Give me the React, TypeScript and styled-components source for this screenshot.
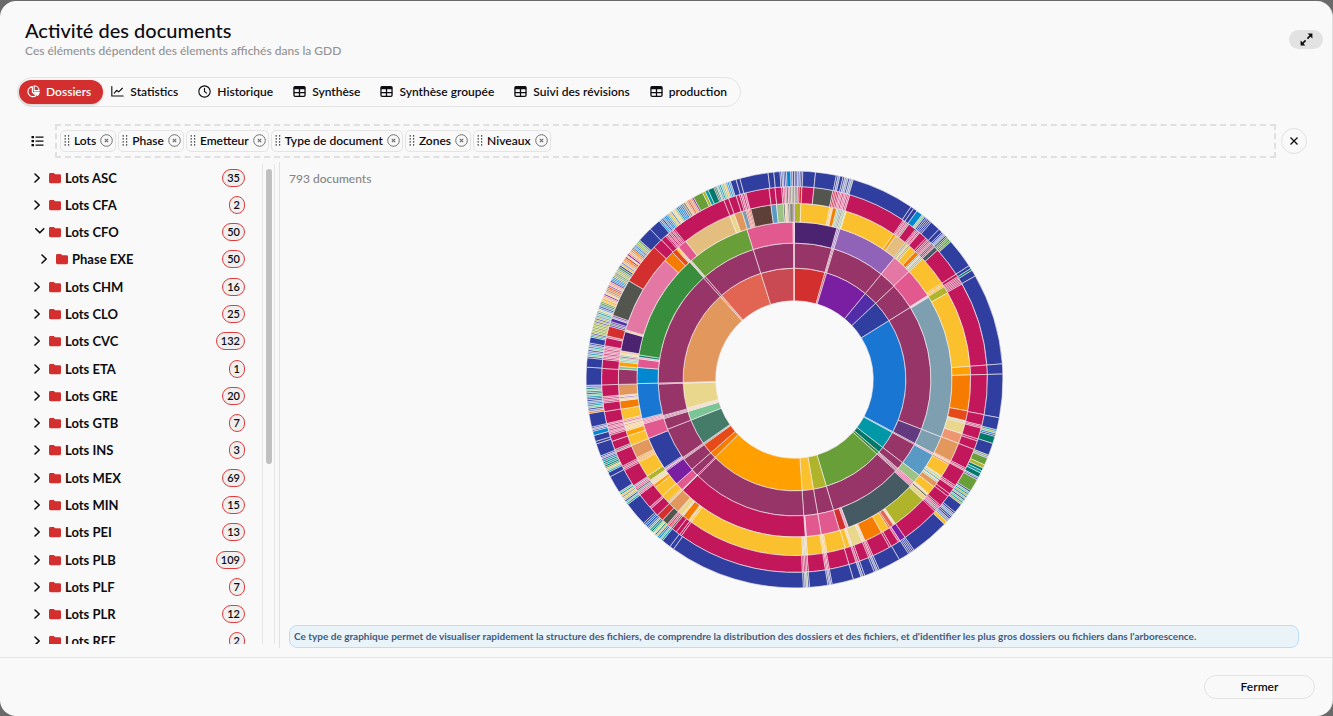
import React from 'react';
import styled, { createGlobalStyle } from 'styled-components';

const GlobalStyle = createGlobalStyle`
  * { box-sizing: border-box; }
  body {
    margin: 0;
    background: #6a6a6a;
    color: #0d0d12;
    font-family: Lato, "Open Sans", sans-serif;
    font-size: 12px;
  }
  button { font: inherit; color: inherit; cursor: pointer; }
`;

const Backdrop = styled.div`
  height: 100vh;
  padding-top: 1px;
  background: #6a6a6a;
`;

const Modal = styled.section`
  display: flex;
  flex-direction: column;
  height: 100%;
  overflow: hidden;
  background: #f9f9f9;
  border-right: 1px solid #e0e0e0;
  border-radius: 16px;
`;

const Header = styled.header`
  display: flex;
  align-items: flex-start;
  justify-content: space-between;
  padding: 17px 9px 0 25px;
`;

const Title = styled.h1`
  margin: 0;
  font-size: 20px;
  font-weight: 500;
  line-height: 24px;
`;

const Subtitle = styled.p`
  margin: 0;
  font-size: 12px;
  font-weight: 500;
  line-height: 18px;
  color: #929292;
`;

const ExpandButton = styled.button`
  display: flex;
  align-items: center;
  justify-content: center;
  width: 34px;
  height: 19px;
  margin-top: 12px;
  padding: 0;
  border: 0;
  border-radius: 10px;
  background: #e2e2e2;
`;

const TabBar = styled.nav`
  display: flex;
  align-self: flex-start;
  align-items: center;
  height: 30px;
  margin: 17px 0 0 17px;
  padding: 0 1px;
  border: 1px solid #e4e4e4;
  border-radius: 15px;
`;

const Tab = styled.button<{ $active?: boolean }>`
  display: flex;
  align-items: center;
  gap: 6px;
  height: 24px;
  padding: 0 12px 2px 8px;
  border: 0;
  border-radius: 12px;
  font-weight: 600;
  white-space: nowrap;
  background: ${(p) => (p.$active ? '#d32f2f' : 'transparent')};
  color: ${(p) => (p.$active ? '#ffffff' : 'inherit')};
  box-shadow: ${(p) => (p.$active ? '0 1px 3px rgba(0, 0, 0, 0.2)' : 'none')};
`;

const FilterRow = styled.div`
  display: flex;
  align-items: center;
  margin-top: 17px;
  padding: 0 25px 0 31px;
`;

const IconButton = styled.button`
  display: flex;
  padding: 0;
  border: 0;
  background: transparent;
`;

const DropZone = styled.div`
  display: flex;
  flex: 1;
  align-items: center;
  gap: 2px;
  height: 34px;
  margin: 0 5px 0 11px;
  padding: 0 3px;
  border: 2px dashed #e0e0e0;
`;

const Chip = styled.div`
  display: flex;
  align-items: center;
  gap: 4px;
  height: 22px;
  padding: 0 2px 1px 3px;
  border: 1px solid #e4e4e4;
  border-radius: 5px;
  font-weight: 600;
  white-space: nowrap;
`;

const CloseButton = styled.button`
  display: flex;
  align-items: center;
  justify-content: center;
  width: 26px;
  height: 26px;
  padding: 0;
  border: 1px solid #e2e2e2;
  border-radius: 50%;
  background: transparent;
`;

const Panels = styled.div`
  display: flex;
  flex: 1;
  min-height: 0;
  margin: 4px 0 9px;
`;

const TreePanel = styled.aside`
  display: flex;
  width: 280px;
  padding: 2px 4px 4px 0;
  border-right: 1px solid #e0e0e0;
`;

const Tree = styled.ul`
  display: grid;
  flex: 1;
  grid-auto-rows: 1fr;
  height: 491px;
  margin: 0;
  padding: 0;
  list-style: none;
`;

const TreeViewport = styled.div`
  display: flex;
  flex: 1;
  align-items: flex-start;
  overflow: hidden;
`;

const TreeRow = styled.li<{ $depth: number }>`
  display: flex;
  align-items: center;
  padding: 0 17px 0 ${(p) => 32 + p.$depth * 7}px;
`;

const Toggle = styled.button`
  display: flex;
  flex: 1;
  align-items: center;
  gap: 4px;
  padding: 0;
  border: 0;
  background: transparent;
  font-size: 13px;
  font-weight: 700;
  line-height: 16px;
`;

const Count = styled.span`
  padding: 0 4px;
  border: 1px solid #e23b3b;
  border-radius: 9px;
  background: #f0f0f0;
  font-size: 11px;
  font-weight: 600;
  line-height: 16px;
`;

const ScrollTrack = styled.div`
  width: 13px;
  padding: 5px 2px 0 3px;
  border: 1px solid #e6e6e6;
  border-width: 0 1px;
`;

const ScrollThumb = styled.div`
  height: 62%;
  border-radius: 4px;
  background: #c0c0c0;
`;

const ChartPanel = styled.main`
  display: flex;
  flex: 1;
  flex-direction: column;
  justify-content: space-between;
  padding: 0 33px 0 9px;
`;

const ChartArea = styled.div`
  display: grid;
  grid-template-columns: 1fr auto 1fr;
  padding-top: 9px;
`;

const DocumentCount = styled.p`
  margin: 0;
  font-size: 12px;
  font-weight: 500;
  line-height: 15px;
  color: #858585;
`;

const Info = styled.p`
  margin: 0;
  padding: 0 4px;
  border: 1px solid #bcdcfa;
  border-radius: 8px;
  background: #eaf4f8;
  color: #435a80;
  font-size: 10px;
  font-weight: 700;
  line-height: 21px;
`;

const Footer = styled.footer`
  display: flex;
  align-items: center;
  justify-content: flex-end;
  height: 59px;
  padding: 0 17px;
  border-top: 1px solid #e4e4e4;
`;

const FooterButton = styled.button`
  width: 111px;
  height: 24px;
  padding: 0 0 2px;
  border: 1px solid #e2e2e2;
  border-radius: 12px;
  background: transparent;
  font-weight: 600;
`;

/* ---------- icons ---------- */

const PieIcon = () => (
  <svg width="13" height="13" viewBox="0 0 16 16" fill="none" stroke="currentColor" strokeWidth="1.4" strokeLinejoin="round" aria-hidden="true">
    <path d="M6.6 2A6.2 6.2 0 1 0 11 13.2L6.6 8.6Z" />
    <path d="M8.8 0.9A6.2 6.2 0 0 1 14.9 6.8H8.8Z" />
    <path d="M8.8 8.8H15A6.2 6.2 0 0 1 13 12.8Z" fill="currentColor" />
  </svg>
);

const LineChartIcon = () => (
  <svg width="13" height="13" viewBox="0 0 16 16" fill="none" stroke="currentColor" strokeWidth="1.4" strokeLinecap="round" strokeLinejoin="round" aria-hidden="true">
    <path d="M1 2V13.5H15" />
    <path d="M4 10L7 6.5L9.5 8.5L14 4" />
  </svg>
);

const ClockIcon = () => (
  <svg width="13" height="13" viewBox="0 0 16 16" fill="none" stroke="currentColor" strokeWidth="1.4" strokeLinecap="round" aria-hidden="true">
    <circle cx="8" cy="8" r="7" />
    <path d="M8 4V8L10.5 10" />
  </svg>
);

const TableIcon = () => (
  <svg width="13" height="13" viewBox="0 0 16 16" fill="none" stroke="currentColor" strokeWidth="1.6" aria-hidden="true">
    <rect x="1.2" y="2" width="13.6" height="12" rx="1.4" />
    <path d="M1 3.6H15" strokeWidth="3.2" />
    <path d="M1 9.4H15M8 4V14" />
  </svg>
);

const ListIcon = () => (
  <svg width="13" height="12" viewBox="0 0 13 12" fill="currentColor" aria-hidden="true">
    <path d="M0.5 1H3V3.2H0.5ZM0.5 5H3V7.2H0.5ZM0.5 9H3V11.2H0.5ZM4.5 1.4H12.5V2.8H4.5ZM4.5 5.4H12.5V6.8H4.5ZM4.5 9.4H12.5V10.8H4.5Z" />
  </svg>
);

const GripIcon = () => (
  <svg width="6" height="11" viewBox="0 0 6 11" fill="currentColor" aria-hidden="true">
    {[1, 4, 7, 10].map((y) => (
      <React.Fragment key={y}>
        <rect x="0.6" y={y - 0.7} width="1.2" height="1.2" />
        <rect x="4" y={y - 0.7} width="1.2" height="1.2" />
      </React.Fragment>
    ))}
  </svg>
);

const CircleXIcon = () => (
  <svg width="13" height="13" viewBox="0 0 13 13" fill="none" stroke="#707070" strokeWidth="1" aria-hidden="true">
    <circle cx="6.5" cy="6.5" r="5.8" />
    <path d="M4.8 4.8L8.2 8.2M8.2 4.8L4.8 8.2" strokeWidth="1.2" />
  </svg>
);

const CrossIcon = () => (
  <svg width="8" height="8" viewBox="0 0 8 8" stroke="currentColor" strokeWidth="1.3" aria-hidden="true">
    <path d="M0.5 0.5L7.5 7.5M7.5 0.5L0.5 7.5" />
  </svg>
);

const ExpandIcon = () => (
  <svg width="13" height="13" viewBox="0 0 13 13" fill="none" stroke="currentColor" strokeWidth="1.6" aria-hidden="true">
    <path d="M11.4 1.6L7.4 5.6M1.6 11.4L5.6 7.4" />
    <path d="M7.6 0.6H12.4V5.4L10.9 3.9L9.1 2.1ZM0.6 7.6V12.4H5.4L3.9 10.9L2.1 9.1Z" fill="currentColor" stroke="none" />
  </svg>
);

const Chevron = ({ open }: { open?: boolean }) => (
  <svg width="13" height="12" viewBox="0 0 13 12" fill="none" stroke="currentColor" strokeWidth="1.6" strokeLinecap="round" strokeLinejoin="round" aria-hidden="true">
    <path d={open ? 'M3.8 2.8L7.8 6.8L11.8 2.8' : 'M3 2L7.2 6L3 10'} />
  </svg>
);

const FolderIcon = () => (
  <svg width="12" height="12" viewBox="0 0 12 12" fill="#d32f2f" aria-hidden="true">
    <path d="M1.4 1H4.8L6.2 2.2H10.6A1.4 1.4 0 0 1 12 3.6V9.8A1.4 1.4 0 0 1 10.6 11.2H1.4A1.4 1.4 0 0 1 0 9.8V2.4A1.4 1.4 0 0 1 1.4 1Z" />
  </svg>
);

/* ---------- sunburst ---------- */

const palette: Record<string, string> = {
  b: '#303f9f', k: '#1976d2', s: '#0288d1', c: '#c2185b', p: '#983568', P: '#e25990',
  q: '#e478a4', y: '#fbc02d', o: '#ffa000', O: '#f57c00', R: '#e64a19', r: '#d32f2f',
  g: '#689f38', G: '#388e3c', t: '#0097a7', T: '#00796b', v: '#afb42b', V: '#7b1fa2',
  i: '#512da8', d: '#4c2370', D: '#633a80', l: '#9163b8', x: '#52564e', X: '#465a63',
  z: '#7e9fb0', Z: '#5899c5', m: '#79c596', n: '#9cc286', N: '#447c69', h: '#e9d78e',
  a: '#e4be7e', e: '#e2975d', f: '#ee9670', E: '#e16552', u: '#c94a53', B: '#5d4037',
  w: '#8f8a78',
};

/* Tint of the "W" key, one for each ring from the centre outwards. */
const tints = ['#f0c8c0', '#c58aa8', '#e6a3c0', '#efcf95', '#d75a8c', '#7f8bc8'];

/* Each entry is an end angle in degrees followed by its colour key.
   Several keys mean a run of single documents cycling through these colours. */
const rings = [
  `15.9r 16.8u 39.5V 46.8i 58.1b 118k 118.5s 127.6t 130.7T 132.1G 163.4g 170.2v 176.1y
   225.6o 228.8O 234.2R 235.1BX 248.6N 253.3m 254.7aa 255.2a 268.1h 268.5h 318.2e 319.1f
   342.4E 359.6u 360r`,
  `15.9p 16.8pp 39.5p 46.8p 58.1p 111.4p 118D 118.5p 127.6p 130.7p 132.1pp 163.4p 170.2p
   176.1p 225p 225.6p 228.8p 234.2p 235.1pp 248.6p 253.3p 254.7pp 268.1p 268.5p 318.2p
   319.1p 342.4p 359.6p 360p`,
  `15.7d 16.8ll 39.4l 46.7q 57.8P 58.5WW 111.4z 118z 118.6WP 127.5Z 130.7n 132.7PP
   160X 160.9W 163.4r 170.2P 175.7P 176.1W 225.3c 225.6W 228.5P 234.5V 235.8VW 248b
   253.6P 255.5PP 268.5k 274.4s 277.6P 278.2W 279T 318.3G 319.1Wn 342.4g 359.5P 360W`,
  `2.1v 11.6y 12.6yW 13.9O 16.8nmzw 17.1W 34.2y 35.2o 39.1a 41.2wvh 43.4y 44.8O 46.7mWn
   56.8y 58.2oy 60.5v 85.7y 88.5o 100.3O 103.6R 104.4hnT 108h 111.3f 117.6e 118.9fhR
   123.3y 125.8hmyt 127.6e 130.4y 131.2hW 131.7x 133.2h 145v 145.8Wh 147.2E 147.7R 150.4y
   156.4O 157.4Wh 160.9h 161.6Wy 163.2y 169.4y 170.8yW 175.8y 177.4aWn 215.9y 217yW
   219.2O 219.7W 221.4h 225.3e 226.1yO 228.7y 232.2y 233.3o 235.1Wh 236.7v 242y 243.6oO
   248e 251.3y 253o 254.8yW 256.8fhP 260.3y 263O 264.8hal 268.4e 273.4p 274.3m 275.8o
   277.2mm 278.6pmh 279.4W 285.8d 286.4W 312.6q 316.2O 317.8R 318.8yW 321.8P 338.4a
   340h 342.6e 344z 345.6rER 352.3B 354.1Z 356.4n 358.4xWa 359.6w 360V`,
  `0.9xw 1.4c 2.2r 5.8c 11.5x 13cr 16.7cWP 34.3c 35.9cW 36.4w 38.9c 40.5cW 42.9c 44cW
   46.6cWPx 47.9X 56.9c 57.8c 60.3cc 85.7c 88.5c 100.5c 103.8c 104.6cc 108c 108.6c 111.3c
   117.4c 118.3cW 123.4c 124.4cWP 126.4c 127.3c 130.8c 133.2cPWz 145c 146.8V 147.4P 149.9c
   150.5c 156c 157.4cW 160.3c 161.4cW 163.6c 169.6c 170.8cW 175.9c 177.7cc 215.9c 216.5c
   217.8c 219.3c 221.3xWrP 223.2x 225.3r 228c 228.6W 233.3c 236.6WPzx 241.9c 243.3cW
   247.8c 248.7Wx 251.3c 253.2c 256.8cWP 260.4c 263c 264.9cW 268.4c 273.3c 276c 280.1cPW
   282.6c 283.1W 286.1r 287.5iN 288.6i 289.5zV 300.8x 313.3r 316.4c 318.1c 321.4cW 338.5c
   340c 342.4c 343.4c 345.4cP 352.4c 354.2c 356.2c 358.6cPw 360ww`,
  `2.3bbW 5.8b 11.6b 12.6bW 13.5b 16.4bWz 34b 34.9b 36b 37.8s 38.7nmt 41bb 43.9b 45b
   46.8bWzb 48.6Gg 56.9b 57.8b 58.4T 60.2b 85.7b 88.5b 100.6b 104b 105.9tvsbh 107.9T
   111.3b 112.2gWb 114.2g 115.2v 116T 116.7t 118T 118.8Wb 122.3g 126.9bmtvsn 129.6b
   133bWzb 134y 145b 146.8bb 149.8b 156b 157.5bW 160.3b 161.4bW 163.6b 169.6b 170.8bW
   175.9b 177.6bnWb 215.5b 216.7b 219.3b 224.9tmksythmT 226.4bk 233.2b 237.3tmbnyZy
   242.2b 243.5b 245.2tmyG 247.2Tt 248.5bW 252b 252.7b 254.4b 255.6s 256.8bW 260.6b 261.6OW
   264.9bmtkZb 267.8tmT 268.4W 273.4b 276b 280.1bmtW 281.8b 283tgb 286vgvg 287.6bv
   291.2ZmtmhZb 293Ggyo 298.4afVhewORl 299.6sk 302.3vzgn 304.3GbyW 309aeOrhVf
   310.6kz 312vmg 316.2b 319.5b 322.6sZbZk 325.4nyZhh 327.2sk 328.3ww 331afReeVO
   333.8g 334.6v 335.5t 337.2T 338.4xTn 342.1ZtmnyZs 343.7b 344.8b 352.7b 354.3b 356b
   357.8bWb 359s 360lb`,
];

const RADIUS = 208.4;
const LEVELS = rings.length + 1;
const DOCUMENT_ANGLE = 360 / 793;

const polar = (r: number, deg: number) => {
  const a = (deg * Math.PI) / 180;
  return `${(r * Math.sin(a)).toFixed(2)} ${(-r * Math.cos(a)).toFixed(2)}`;
};

const arcPath = (r0: number, r1: number, from: number, to: number) => {
  const large = to - from > 180 ? 1 : 0;
  return `M${polar(r1, from)}A${r1} ${r1} 0 ${large} 1 ${polar(r1, to)}L${polar(r0, to)}A${r0} ${r0} 0 ${large} 0 ${polar(r0, from)}Z`;
};

const ringSegments = (spec: string) => {
  const segments: { from: number; to: number; key: string }[] = [];
  let from = 0;
  for (const [, end, keys] of spec.matchAll(/([\d.]+)([A-Za-z]+)/g)) {
    const to = Number(end);
    const count = keys.length === 1 ? 1 : Math.max(1, Math.round((to - from) / DOCUMENT_ANGLE));
    const step = (to - from) / count;
    for (let n = 0; n < count; n++) {
      segments.push({ from: from + n * step, to: from + (n + 1) * step, key: keys[n % keys.length] });
    }
    from = to;
  }
  return segments;
};

const Sunburst = () => (
  <svg width="417" height="417" viewBox="-208.5 -208.5 417 417" role="img" aria-label="Répartition des documents">
    <g stroke="#f6eef2" strokeWidth="0.6">
      {rings.map((spec, level) => {
        const r0 = RADIUS * Math.sqrt((level + 1) / LEVELS);
        const r1 = RADIUS * Math.sqrt((level + 2) / LEVELS);
        return ringSegments(spec).map((s) => (
          <path
            key={`${level}-${s.from}`}
            d={arcPath(r0, r1, s.from, s.to)}
            fill={s.key === 'W' ? tints[level] : palette[s.key]}
          />
        ));
      })}
    </g>
  </svg>
);

/* ---------- data ---------- */

const tabs = [
  { label: 'Dossiers', Icon: PieIcon, active: true },
  { label: 'Statistics', Icon: LineChartIcon },
  { label: 'Historique', Icon: ClockIcon },
  { label: 'Synthèse', Icon: TableIcon },
  { label: 'Synthèse groupée', Icon: TableIcon },
  { label: 'Suivi des révisions', Icon: TableIcon },
  { label: 'production', Icon: TableIcon },
];

const chips = ['Lots', 'Phase', 'Emetteur', 'Type de document', 'Zones', 'Niveaux'];

const folders: { name: string; count: number; depth?: number; open?: boolean }[] = [
  { name: 'Lots ASC', count: 35 },
  { name: 'Lots CFA', count: 2 },
  { name: 'Lots CFO', count: 50, open: true },
  { name: 'Phase EXE', count: 50, depth: 1 },
  { name: 'Lots CHM', count: 16 },
  { name: 'Lots CLO', count: 25 },
  { name: 'Lots CVC', count: 132 },
  { name: 'Lots ETA', count: 1 },
  { name: 'Lots GRE', count: 20 },
  { name: 'Lots GTB', count: 7 },
  { name: 'Lots INS', count: 3 },
  { name: 'Lots MEX', count: 69 },
  { name: 'Lots MIN', count: 15 },
  { name: 'Lots PEI', count: 13 },
  { name: 'Lots PLB', count: 109 },
  { name: 'Lots PLF', count: 7 },
  { name: 'Lots PLR', count: 12 },
  { name: 'Lots REF', count: 2 },
];

export default function App() {
  return (
    <Backdrop>
      <GlobalStyle />
      <Modal>
        <Header>
          <div>
            <Title>Activité des documents</Title>
            <Subtitle>Ces éléments dépendent des élements affichés dans la GDD</Subtitle>
          </div>
          <ExpandButton aria-label="Agrandir">
            <ExpandIcon />
          </ExpandButton>
        </Header>

        <TabBar>
          {tabs.map(({ label, Icon, active }) => (
            <Tab key={label} $active={active}>
              <Icon />
              {label}
            </Tab>
          ))}
        </TabBar>

        <FilterRow>
          <IconButton aria-label="Liste">
            <ListIcon />
          </IconButton>
          <DropZone>
            {chips.map((chip) => (
              <Chip key={chip}>
                <GripIcon />
                {chip}
                <IconButton aria-label={`Retirer ${chip}`}>
                  <CircleXIcon />
                </IconButton>
              </Chip>
            ))}
          </DropZone>
          <CloseButton aria-label="Effacer">
            <CrossIcon />
          </CloseButton>
        </FilterRow>

        <Panels>
          <TreePanel>
            <TreeViewport>
              <Tree>
                {folders.map(({ name, count, depth = 0, open }) => (
                  <TreeRow key={name} $depth={depth}>
                    <Toggle aria-expanded={!!open}>
                      <Chevron open={open} />
                      <FolderIcon />
                      {name}
                    </Toggle>
                    <Count>{count}</Count>
                  </TreeRow>
                ))}
              </Tree>
            </TreeViewport>
            <ScrollTrack>
              <ScrollThumb />
            </ScrollTrack>
          </TreePanel>

          <ChartPanel>
            <ChartArea>
              <DocumentCount>793 documents</DocumentCount>
              <Sunburst />
            </ChartArea>
            <Info>
              Ce type de graphique permet de visualiser rapidement la structure des fichiers, de comprendre la
              distribution des dossiers et des fichiers, et d'identifier les plus gros dossiers ou fichiers dans
              l'arborescence.
            </Info>
          </ChartPanel>
        </Panels>

        <Footer>
          <FooterButton>Fermer</FooterButton>
        </Footer>
      </Modal>
    </Backdrop>
  );
}
